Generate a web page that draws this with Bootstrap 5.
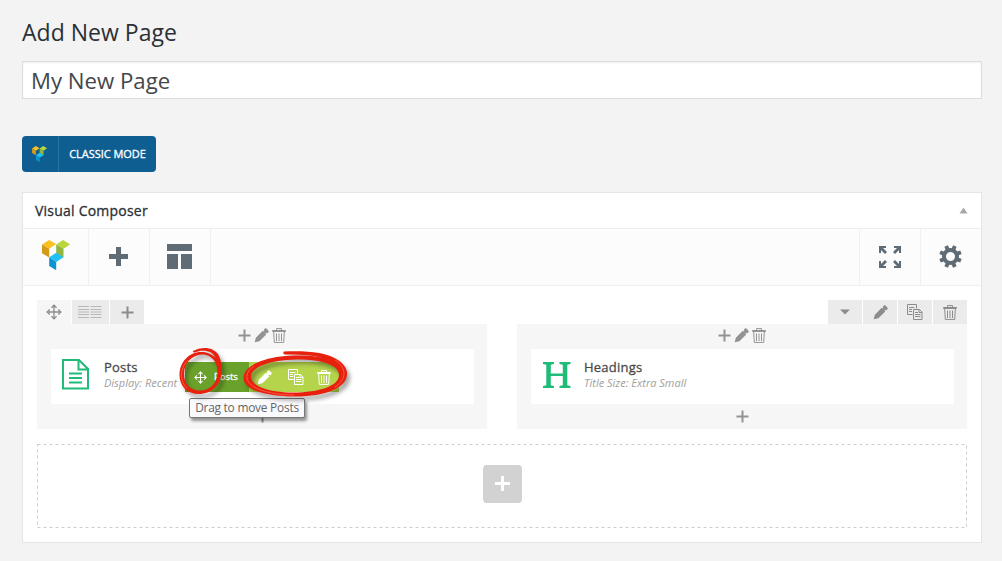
<!DOCTYPE html>
<html lang="en">
<head>
<meta charset="utf-8">
<meta name="viewport" content="width=device-width, initial-scale=1">
<title>Add New Page</title>
<link href="https://cdn.jsdelivr.net/npm/bootstrap@5.3.0/dist/css/bootstrap.min.css" rel="stylesheet">
<style>
body{background:#f3f3f3;font-family:"Open Sans",sans-serif;font-size:13px;color:#32373c;overflow:hidden;line-height:1.4}
svg{display:block;flex:none}
.page{width:960px;margin-left:22px;padding-top:16px}
.page-title{font-size:23px;line-height:32px;height:45px;margin:0;font-weight:400;letter-spacing:.02px;color:#2b3036}
.title-input{height:38px;border:1px solid #ddd;border-radius:0;padding:0 8px;font-size:22.2px;color:#43474b;box-shadow:inset 0 1px 2px rgba(0,0,0,.07)}
.semi{-webkit-text-stroke:.3px currentColor}
.mode-btn{margin-top:37px;width:134px;height:36px;background:#0e5e92;border-radius:4px;color:#fff;font-size:11px;border:0;padding:0;letter-spacing:-.04px}
.mode-btn:hover{background:#0e5e92;color:#fff}
.mode-logo{width:37px;height:36px;padding-right:2px;border-right:1px solid #2b73a2}
.composer{margin-top:20px;height:351px;border:1px solid #e5e5e5;border-radius:0;background:#fff}
.composer-head{height:36px;border-bottom:1px solid #eee;padding:0 13px 0 12px;color:#2b3036}
.composer-head span{font-size:14px;letter-spacing:.22px}
.tools{height:57px;background:#fcfcfc;border-bottom:1px solid #f0f0f0;color:#5f6b75}
.tool{width:61px;height:56px;padding:0 1px 1px 0;border-right:1px solid #f0f0f0}
.tool-first{width:66px;padding:0 0 0 1px}
.tool-r{border-right:0;border-left:1px solid #f0f0f0;padding-right:2px}
.canvas{padding:14px 14px 0}
.ctl{height:24px;width:34px;background:#ebebeb;color:#8c8c8c}
.ctl-move{background:#f6f6f6}
.ctl-cols{width:37px;padding-right:1px}
.vc-col{width:450px;height:105px;background:#f6f6f6;padding:0 13px;color:#939393}
.col-tools{height:25px;padding:0 1px 2px 0;gap:3px}
.element{height:55px;background:#fff;position:relative;margin-left:1px}
.element-icon{width:53px;padding-left:11px;padding-bottom:4px}
.element-text{padding-bottom:4px}
.element-name{font-size:13px;color:#4a4a4a;line-height:16px;letter-spacing:.22px}
.element-info{font-size:11px;font-style:italic;color:#a0a0a0;line-height:16px}
.hover-bar{position:absolute;left:134px;top:13px;height:30px;width:154px;background:#b4d44c;color:#fff;font-size:9.5px}
.hover-name{width:64px;height:30px;background:#6aa12b;padding-left:9px;gap:7px}
.hover-act{width:30px}
.tip-box{position:absolute;left:138px;top:49px;width:116px;height:20px;border:1px solid #777;border-radius:2px;background:#fafafc;color:#656565;font:11.9px/17px "Open Sans",sans-serif;text-align:center;box-shadow:2px 3px 3px rgba(0,0,0,.4);letter-spacing:-.23px;white-space:nowrap;z-index:2}
.marker{position:absolute;left:124px;top:-5px;z-index:3;filter:drop-shadow(3px 4px 2px rgba(0,0,0,.35))}
.drop-row{height:84px;margin-top:15px}
.drop-btn{width:39px;height:38px;border-radius:4px;background:#d2d2d2;color:#fff;border:0;padding:0;margin-top:-4px}
.drop-btn svg{margin-top:-2px}
.foot{height:25px;padding-bottom:1px}
</style>
</head>
<body>
<svg width="0" height="0" class="position-absolute" aria-hidden="true">
 <symbol id="logo" viewBox="0 0 28 30">
  <path fill="#f9c022" d="M0 4.500 7.200 0 14.200 4 7.200 8.800z"/><path fill="#d39a17" d="M0 4.500l7.200 4.300v8.700L0 13.200z"/>
  <path fill="#b9d63c" d="M14.200 4.500 21 0l7.200 4.300-6.700 4.500z"/><path fill="#92b540" d="M14.200 4.500l7.300 4.300v9l-7.300-4.300z"/>
  <path fill="#1fc0f5" d="M7.200 17.200 14.200 12.800l7.300 4.500-7.300 4.700z"/><path fill="#0a93d0" d="M7.200 17.200l7 4.800v8.200l-7-4.300z"/>
 </symbol>
 <symbol id="plus" viewBox="0 0 13 13"><path d="M6.500 .5v12M.5 6.500h12" stroke="currentColor" stroke-width="2"/></symbol>
 <symbol id="pencil" viewBox="0 0 16 16"><path fill="currentColor" d="M.7 15.300 2 10.300 9.300 3l3.800 3.800-7.400 7.400zM10.200 2.100l1.300-1.300c.6-.6 1.400-.5 2 0L15.300 2.600c.5.600.5 1.400 0 1.900L14 5.900z"/><path stroke="currentColor" stroke-width="3" d="M4 12 12.500 3.500"/></symbol>
 <symbol id="trash" viewBox="0 0 14 15"><g fill="none" stroke="currentColor"><path d="M.5 3.500h13v-1H.5zM4.500 2V.600h5V2M1.700 4l.6 10.400h9.400L12.300 4M4.500 5.500v7.500M7 5.500v7.500M9.500 5.500v7.500"/></g></symbol>
 <symbol id="copy" viewBox="0 0 16 16"><g fill="none" stroke="currentColor"><path d="M5.500 10.500h-5V.500h9v4M2 3.500h5.500M2 5.500h3M2 7.500h3M6.500 5.500h6l2.500 2.500v7.500H6.500zM12 5.500v3h3M8 8.500h3M8 10.500h5.500M8 12.500h5.500"/></g></symbol>
 <symbol id="move" viewBox="0 0 16 16"><path d="M8 1v14M1 8h14" stroke="currentColor" stroke-width="1.300"/><path d="M5.500 3.700 8 1.200l2.500 2.500M5.500 12.300 8 14.800l2.500-2.500M3.700 5.500 1.200 8l2.500 2.500M12.300 5.500 14.800 8l-2.500 2.500" fill="none" stroke="currentColor" stroke-width="1.300"/></symbol>
</svg>

<main class="page">
 <h1 class="page-title">Add New Page</h1>
 <input class="form-control title-input" value="My New Page" aria-label="Title">
 <button class="btn mode-btn d-flex align-items-center">
  <span class="mode-logo d-flex align-items-center justify-content-center"><svg width="17" height="16"><use href="#logo"/></svg></span>
  <span class="semi flex-fill text-center">CLASSIC MODE</span>
 </button>

 <section class="card composer">
  <div class="composer-head d-flex align-items-center justify-content-between">
   <span class="semi">Visual Composer</span>
   <svg width="9" height="7"><path d="M4.500 .5 8.500 6.500h-8z" fill="#a8a8a8"/></svg>
  </div>
  <div class="tools d-flex">
   <div class="tool tool-first d-flex align-items-center justify-content-center"><svg width="28" height="30" class="mb-1"><use href="#logo"/></svg></div>
   <div class="tool d-flex align-items-center justify-content-center"><svg width="19" height="19"><path fill="currentColor" d="M7 0h5v7h7v5h-7v7H7v-7H0V7h7z"/></svg></div>
   <div class="tool d-flex align-items-center justify-content-center"><svg width="25" height="25"><path fill="currentColor" d="M0 0h25v7H0zM0 10h11v15H0zM14 10h11v15H14z"/></svg></div>
   <div class="tool tool-r d-flex align-items-center justify-content-center ms-auto"><svg width="22" height="22" style="margin-left:1px"><path fill="currentColor" d="M0 0h7v2H4l4 4-2 2-4-4v3H0zM22 0v7h-2V4l-4 4-2-2 4-4h-3V0zM0 22v-7h2v3l4-4 2 2-4 4h3v2zM22 22h-7v-2h3l-4-4 2-2 4 4v-3h2z"/></svg></div>
   <div class="tool tool-r d-flex align-items-center justify-content-center"><svg width="23" height="23" viewBox="-11.500 -11.500 23 23"><circle r="6.500" fill="none" stroke="currentColor" stroke-width="4"/><g fill="currentColor"><path id="tooth" d="M-2-7.500-1.900-11.300H1.900L2-7.500zM-2 7.500-1.900 11.300H1.900L2 7.500z" transform="rotate(22.500)"/><use href="#tooth" transform="rotate(45)"/><use href="#tooth" transform="rotate(90)"/><use href="#tooth" transform="rotate(135)"/></g></svg></div>
  </div>

  <div class="canvas">
   <div class="d-flex">
    <div class="ctl ctl-move d-flex align-items-center justify-content-center"><svg width="16" height="16"><use href="#move"/></svg></div>
    <div class="ctl ctl-cols d-flex align-items-center justify-content-center" style="margin-left:1px"><svg width="24" height="12"><path d="M0 .5h11M0 3.500h11M0 6h11M0 8.500h11M0 11.500h11M12.500 .5h11M12.500 3.500h11M12.500 6h11M12.500 8.500h11M12.500 11.500h11" stroke="#b8b8b8"/></svg></div>
    <div class="ctl d-flex align-items-center justify-content-center" style="margin-left:1px"><svg width="13" height="13"><use href="#plus"/></svg></div>
    <div class="d-flex ms-auto" style="gap:1px">
     <div class="ctl d-flex align-items-center justify-content-center"><svg width="10" height="6"><path d="M0 .5h10L5 5.500z" fill="currentColor"/></svg></div>
     <div class="ctl d-flex align-items-center justify-content-center"><svg width="15" height="15"><use href="#pencil"/></svg></div>
     <div class="ctl d-flex align-items-center justify-content-center"><svg width="16" height="16"><use href="#copy"/></svg></div>
     <div class="ctl d-flex align-items-center justify-content-center"><svg width="14" height="15"><use href="#trash"/></svg></div>
    </div>
   </div>

   <div class="d-flex justify-content-between">
    <div class="vc-col">
     <div class="col-tools d-flex align-items-center justify-content-center"><svg width="13" height="13"><use href="#plus"/></svg><svg width="15" height="15"><use href="#pencil"/></svg><svg width="14" height="15"><use href="#trash"/></svg></div>
     <div class="element d-flex align-items-center">
      <div class="element-icon"><svg width="27" height="31" viewBox="0 0 27 31" fill="none" stroke="#1fbb79" stroke-width="2"><path d="M1 1h16l9 9v19.500H1zM16.500 1v9.500H26M7 14.500h13M7 19h13M7 23.500h13"/></svg></div>
      <div class="element-text"><div class="element-name semi">Posts</div><div class="element-info">Display: Recent</div></div>
      <div class="hover-bar d-flex align-items-center">
       <div class="hover-name d-flex align-items-center"><svg width="13" height="13"><use href="#move"/></svg><span class="semi">Posts</span></div>
       <div class="hover-act d-flex justify-content-center"><svg width="15" height="15"><use href="#pencil"/></svg></div>
       <div class="hover-act d-flex justify-content-center ps-1"><svg width="16" height="16"><use href="#copy"/></svg></div>
       <div class="hover-act d-flex justify-content-center"><svg width="14" height="15"><use href="#trash"/></svg></div>
      </div>
      <div class="tip-box">Drag to move Posts</div>
      <svg class="marker" width="180" height="60" viewBox="175 344 180 60">
       <g fill="#e8210f" fill-rule="evenodd">
        <path d="M201 352C212 352 221.500 360 221.500 372C221.500 385 211 394 199 394C187 394 179.500 386 179.500 375C179.500 362 189 352 201 352ZM202 354.500C192 355 184 363 184 374C184 384 190 390.500 200 390.500C210 390.500 217.500 383 217.500 372C217.500 361 211 354.500 202 354.500Z"/>
        <path d="M193 351C202 346 213 347 218 354C221 359 222 366 221.500 372L217.500 371C217.500 362 216 356 211 352.500C206 350 200 350 195 352.500Q192.500 353 193 351Z"/>
        <path d="M243.500 378C243.500 365 266 356 295 355.500C327 355 347 363 347 374C347 388 325 397 293 396.500C263 396 243.500 389 243.500 378ZM251 376.500C251 386 268 392.500 293 392.500C319 392.500 339 386 339 375C339 365 322 359.500 297 359.500C270 360 251 367 251 376.500Z"/>
        <path d="M284 351.500C303 350.500 326 351.500 338 360C344 364 347.500 369 347 375L339.500 376C339 369 336 365 329 361C318 355 303 354.500 285 354.500Q282 353.500 284 351.500Z"/>
       </g>
       <path fill="none" stroke="#ff7058" stroke-width="1" opacity=".7" d="M188 360C179 369 180 382 187 388M254 366C245 372 244 381 254 387C264 392 277 395 294 395M335 360C347 368 347 379 335 387"/>
      </svg>
     </div>
     <div class="foot d-flex align-items-center justify-content-center"><svg width="13" height="13"><use href="#plus"/></svg></div>
    </div>
    <div class="vc-col">
     <div class="col-tools d-flex align-items-center justify-content-center"><svg width="13" height="13"><use href="#plus"/></svg><svg width="15" height="15"><use href="#pencil"/></svg><svg width="14" height="15"><use href="#trash"/></svg></div>
     <div class="element d-flex align-items-center">
      <div class="element-icon"><svg width="30" height="26" viewBox="0 0 30 26" fill="#1fbb79"><path d="M1 0h11v2l-3.200.8V11.500h12V2.800L17.500 2V0h11v2l-3.200.8v20.400l3.200.8v2h-11v-2l3.300-.8V14h-12v9.200l3.200.8v2H1v-2l3.300-.8V2.800L1 2z"/></svg></div>
      <div class="element-text"><div class="element-name semi">Headings</div><div class="element-info">Title Size: Extra Small</div></div>
     </div>
     <div class="foot d-flex align-items-center justify-content-center"><svg width="13" height="13"><use href="#plus"/></svg></div>
    </div>
   </div>

   <div class="drop-row d-flex align-items-center justify-content-center position-relative">
    <svg class="position-absolute top-0 start-0" width="930" height="84"><rect x=".5" y=".5" width="929" height="83" fill="none" stroke="#cdcdcd" stroke-dasharray="3 3"/></svg>
    <button class="btn drop-btn d-flex align-items-center justify-content-center"><svg width="15" height="15" viewBox="0 0 15 15"><path d="M7.500 0v15M0 7.500h15" stroke="#fff" stroke-width="3"/></svg></button>
   </div>
  </div>
 </section>
</main>
<script src="https://cdn.jsdelivr.net/npm/bootstrap@5.3.0/dist/js/bootstrap.bundle.min.js"></script>
</body>
</html>
